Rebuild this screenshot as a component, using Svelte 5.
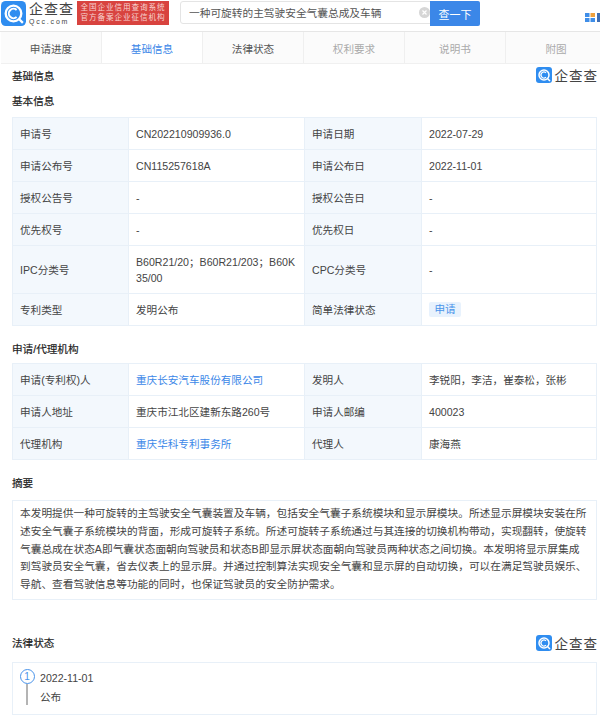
<script>
  const tabs = [
    { name: '申请进度' },
    { name: '基础信息', active: true },
    { name: '法律状态' },
    { name: '权利要求', off: true },
    { name: '说明书', off: true },
    { name: '附图', off: true }
  ];

  const basic = [
    ['申请号', 'CN202210909936.0', '申请日期', '2022-07-29'],
    ['申请公布号', 'CN115257618A', '申请公布日', '2022-11-01'],
    ['授权公告号', '-', '授权公告日', '-'],
    ['优先权号', '-', '优先权日', '-'],
    ['IPC分类号', 'B60R21/20；B60R21/203；B60K35/00', 'CPC分类号', '-']
  ];

  const agency = [
    ['申请(专利权)人', '重庆长安汽车股份有限公司', '发明人', '李锐阳，李洁，崔泰松，张彬', true],
    ['申请人地址', '重庆市江北区建新东路260号', '申请人邮编', '400023'],
    ['代理机构', '重庆华科专利事务所', '代理人', '康海燕', true]
  ];

  const summary = '本发明提供一种可旋转的主驾驶安全气囊装置及车辆，包括安全气囊子系统模块和显示屏模块。所述显示屏模块安装在所述安全气囊子系统模块的背面，形成可旋转子系统。所述可旋转子系统通过与其连接的切换机构带动，实现翻转，使旋转气囊总成在状态A即气囊状态面朝向驾驶员和状态B即显示屏状态面朝向驾驶员两种状态之间切换。本发明将显示屏集成到驾驶员安全气囊，省去仪表上的显示屏。并通过控制算法实现安全气囊和显示屏的自动切换，可以在满足驾驶员娱乐、导航、查看驾驶信息等功能的同时，也保证驾驶员的安全防护需求。';
</script>

{#snippet mark(size)}
  <svg width={size} height={size} viewBox="0 0 32 32" class="mark">
    <rect width="32" height="32" rx="6" fill="#2f8df0" />
    <circle cx="16" cy="16" r="10" fill="none" stroke="#fff" stroke-width="3" />
    <path d="M20 11.5a6 6 0 1 0 0 9" fill="none" stroke="#fff" stroke-width="2.5" />
    <path d="M23 23l5 5" stroke="#fff" stroke-width="3" />
  </svg>
{/snippet}

<div class="page">
  <header>
    <div class="logo">
      {@render mark(25)}
      <div class="logo-text">
        <span class="logo-cn">企查查</span>
        <span class="logo-en">Qcc.com</span>
      </div>
    </div>
    <div class="red-badge">全国企业信用查询系统<br />官方备案企业征信机构</div>
    <div class="search">
      <span class="query">一种可旋转的主驾驶安全气囊总成及车辆</span>
      <svg class="clear" width="11" height="11" viewBox="0 0 11 11">
        <circle cx="5.5" cy="5.5" r="5.5" fill="#d6d6d6" />
        <path d="M3.5 3.5l4 4M7.5 3.5l-4 4" stroke="#fff" stroke-width="1.2" />
      </svg>
      <button>查一下</button>
    </div>
    <div class="apps">
      <svg width="10" height="9" viewBox="0 0 10 9">
        <rect width="4.5" height="4" fill="#3f8ee8" />
        <rect x="5.5" width="4.5" height="4" fill="#f0a13c" />
        <rect y="5" width="4.5" height="4" fill="#3f8ee8" />
        <rect x="5.5" y="5" width="4.5" height="4" fill="#3f8ee8" />
      </svg>
      <span class="apps-edge"></span>
    </div>
  </header>

  <nav>
    {#each tabs as tab}
      <div class="tab" class:active={tab.active} class:off={tab.off}>{tab.name}</div>
    {/each}
  </nav>

  <main>
    <div class="section-head first">
      <h2>基础信息</h2>
      <div class="brand">{@render mark(16)}<span>企查查</span></div>
    </div>

    <h3 class="base">基本信息</h3>
    <div class="grid">
      {#each basic as row}
        <div class="label">{row[0]}</div>
        <div class="value">{row[1]}</div>
        <div class="label">{row[2]}</div>
        <div class="value">{row[3]}</div>
      {/each}
      <div class="label">专利类型</div>
      <div class="value">发明公布</div>
      <div class="label">简单法律状态</div>
      <div class="value"><span class="tag">申请</span></div>
    </div>

    <h3 class="agency">申请/代理机构</h3>
    <div class="grid">
      {#each agency as row}
        <div class="label">{row[0]}</div>
        <div class="value" class:link={row[4]}>{row[1]}</div>
        <div class="label">{row[2]}</div>
        <div class="value">{row[3]}</div>
      {/each}
    </div>

    <h3 class="abstract">摘要</h3>
    <p class="summary">{summary}</p>

    <div class="section-head legal">
      <h3>法律状态</h3>
      <div class="brand">{@render mark(16)}<span>企查查</span></div>
    </div>
    <div class="timeline">
      <div class="rail">
        <span class="dot">1</span>
        <span class="line"></span>
      </div>
      <div class="event">
        <div>2022-11-01</div>
        <div>公布</div>
      </div>
    </div>
  </main>
</div>

<style>
  :global(body) {
    background: #fff;
  }
  .page {
    width: 600px;
    height: 718px;
    overflow: hidden;
    font-family: "Liberation Sans", "Noto Sans CJK SC", sans-serif;
    font-size: 10.6px;
    color: #333;
  }
  header {
    height: 32px;
    display: flex;
    align-items: flex-start;
    padding: 1px 0 0 1px;
    box-sizing: border-box;
    border-bottom: 1px solid #e6e6e6;
  }
  .logo {
    display: flex;
    align-items: flex-start;
    gap: 3px;
    width: 76px;
    flex: none;
  }
  .mark {
    flex: none;
  }
  .logo-text {
    display: flex;
    flex-direction: column;
  }
  .logo-cn {
    font-size: 14px;
    letter-spacing: 1px;
    color: #444;
    line-height: 17px;
  }
  .logo-en {
    font-size: 7px;
    letter-spacing: 1.8px;
    line-height: 8px;
    color: #444;
  }
  .red-badge {
    width: 92px;
    height: 24px;
    flex: none;
    box-sizing: border-box;
    background: #d8433f;
    color: #f7d2cf;
    font-size: 7.6px;
    letter-spacing: 0.9px;
    line-height: 10.5px;
    text-align: center;
    padding-top: 1.5px;
    margin-right: 11px;
    white-space: nowrap;
  }
  .search {
    width: 300px;
    height: 23px;
    flex: none;
    box-sizing: border-box;
    display: flex;
    align-items: center;
    border: 1px solid #e4e4e4;
    border-radius: 3px;
    padding-left: 8px;
    font-size: 10.7px;
    color: #555;
  }
  .query {
    flex: 1;
    margin-top: -1px;
  }
  button {
    width: 50px;
    height: 25px;
    margin: -1px -1px 0 0;
    align-self: flex-start;
    border: none;
    border-radius: 0 2px 2px 0;
    background: #3b87e8;
    color: #fff;
    font: inherit;
    font-size: 11px;
    padding: 0;
    flex: none;
  }
  .apps {
    margin: 12px 0 0 105px;
    display: flex;
    align-items: center;
  }
  .apps-edge {
    width: 3px;
    height: 9px;
    background: #3f6fb5;
    margin-left: 2px;
  }
  nav {
    height: 31px;
    display: grid;
    grid-template-columns: repeat(6, 101px);
    margin-left: 1px;
    background: #fbfbfb;
    border-bottom: 1px solid #f0f0f0;
  }
  .tab {
    display: flex;
    align-items: center;
    justify-content: center;
    padding-top: 2px;
    border-right: 1px solid #efefef;
    color: #555;
  }
  .tab.active {
    color: #3b87e8;
    background: #fff;
  }
  .tab.off {
    color: #aaa;
  }
  main {
    padding: 0 3px 0 12px;
  }
  .section-head {
    display: flex;
    justify-content: space-between;
    align-items: center;
  }
  .section-head.first {
    height: 18px;
    margin-top: 2px;
  }
  h2,
  h3 {
    margin: 0;
    font-size: 10.6px;
    font-weight: 400;
    color: #222;
    -webkit-text-stroke: 0.2px #222;
  }
  h3 {
    height: 17px;
    line-height: 17px;
  }
  h3.base {
    margin: 9px 0 7px;
  }
  .brand {
    display: flex;
    align-items: center;
    gap: 3px;
    font-size: 13.5px;
    letter-spacing: 1px;
    margin-right: -1px;
    color: #444;
  }
  .grid {
    display: grid;
    grid-template-columns: 116px 176px 117px 175px;
    border-top: 1px solid #e8f0f8;
    border-left: 1px solid #e8f0f8;
  }
  .label,
  .value {
    min-height: 32px;
    display: flex;
    align-items: center;
    padding: 7.5px 7px;
    box-sizing: border-box;
    border-right: 1px solid #e8f0f8;
    border-bottom: 1px solid #e8f0f8;
    line-height: 16px;
    word-break: break-all;
    color: #444;
  }
  .label {
    background: #f3f8fd;
  }
  .link {
    color: #3b87e8;
  }
  .tag {
    background: #e8f2fd;
    color: #4a94ea;
    padding: 0 5.5px;
    height: 15px;
    line-height: 15px;
    border-radius: 2px;
  }
  h3.agency {
    margin: 15px 0 5px;
  }
  h3.abstract {
    margin: 15px 0 8px;
  }
  .summary {
    margin: 0;
    box-sizing: border-box;
    height: 100px;
    border: 1px solid #e8f0f8;
    padding: 4px 7px;
    font-size: 10.7px;
    line-height: 17.8px;
    color: #444;
    word-break: break-all;
  }
  .section-head.legal {
    margin-top: 33px;
    height: 20px;
  }
  .timeline {
    margin-top: 9px;
    height: 53px;
    border: 1px solid #e8f0f8;
    box-sizing: border-box;
    display: flex;
    padding: 6px 0 0 7px;
    gap: 6px;
  }
  .rail {
    width: 14px;
    display: flex;
    flex-direction: column;
    align-items: center;
  }
  .dot {
    width: 15px;
    height: 15px;
    flex: none;
    box-sizing: border-box;
    border: 1px solid #4a94ea;
    border-radius: 50%;
    color: #4a94ea;
    font-size: 10px;
    line-height: 13px;
    text-align: center;
  }
  .line {
    display: block;
    width: 2px;
    height: 21px;
    flex: none;
    background: #b4b4b4;
  }
  .event {
    line-height: 19px;
    color: #444;
  }
</style>
